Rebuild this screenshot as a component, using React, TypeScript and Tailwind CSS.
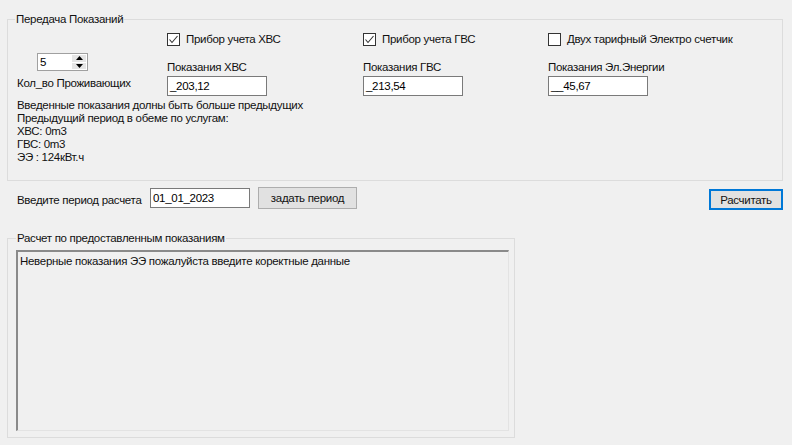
import React from "react";

function CheckBox({ checked, label }: { checked?: boolean; label: string }) {
  return (
    <div className="flex h-[13px] items-center">
      <span className="flex h-[13px] w-[13px] shrink-0 items-center justify-center border border-[#333333] bg-white">
        {checked && (
          <svg width="11" height="11" viewBox="0 0 11 11">
            <path d="M1.5 5.5 L4 8.5 L9.5 2" fill="none" stroke="#333333" strokeWidth="1.1" />
          </svg>
        )}
      </span>
      <span className="ml-[6px] whitespace-nowrap leading-[15px]">{label}</span>
    </div>
  );
}

function TextBox({ value }: { value: string }) {
  return (
    <div className="h-[20px] w-[100px] border border-[#7a7a7a] bg-white pl-[2px] leading-[18px] text-black">
      {value}
    </div>
  );
}

function MeterColumn({ check, checked, label, value, width }: { check: string; checked?: boolean; label: string; value: string; width: string }) {
  return (
    <div className={width}>
      <div className="mt-[6px]">
        <CheckBox checked={checked} label={check} />
      </div>
      <div className="mt-[14px] whitespace-nowrap leading-[15px]">{label}</div>
      <div className="mt-[1px]">
        <TextBox value={value} />
      </div>
    </div>
  );
}

function Spinner() {
  return (
    <div className="flex h-[18px] w-[51px] border border-[#a0a0a0] bg-white">
      <div className="flex-1 pl-[2px] leading-[16px] text-black">5</div>
      <div className="flex w-[15px] flex-col gap-[1px] bg-white py-[1px] pr-[1px]">
        <div className="flex flex-1 items-center justify-center bg-[#e5e5e5]">
          <svg width="7" height="4" viewBox="0 0 7 4">
            <path d="M0 4 L3.5 0 L7 4 Z" fill="#000" />
          </svg>
        </div>
        <div className="flex flex-1 items-center justify-center bg-[#e5e5e5]">
          <svg width="7" height="4" viewBox="0 0 7 4">
            <path d="M0 0 L7 0 L3.5 4 Z" fill="#000" />
          </svg>
        </div>
      </div>
    </div>
  );
}

export default function App() {
  return (
    <div className="flex h-[445px] w-[792px] flex-col overflow-hidden bg-[#f0f0f0] font-['Liberation_Sans',Arial,sans-serif] text-[11.5px] tracking-[-0.3px] text-[#111111]">
      <fieldset className="ml-[7px] mt-[12px] w-[776px] border border-[#dcdcdc] pb-[16px] pl-[9px]">
        <legend className="ml-[-2px] px-[1px] leading-[15px]">Передача Показаний</legend>
        <div className="flex">
          <div className="w-[150px]">
            <div className="ml-[20px] mt-[26px]">
              <Spinner />
            </div>
            <div className="mt-[5px] whitespace-nowrap leading-[15px]">Кол_во Проживающих</div>
          </div>
          <MeterColumn width="w-[196px]" checked check="Прибор учета ХВС" label="Показания ХВС" value="_203,12" />
          <MeterColumn width="w-[185px]" checked check="Прибор учета ГВС" label="Показания ГВС" value="_213,54" />
          <MeterColumn width="w-[200px]" check="Двух тарифный Электро счетчик" label="Показания Эл.Энергии" value="__45,67" />
        </div>
        <div className="mt-[3px] leading-[13px]">
          <div>Введенные показания долны быть больше предыдущих</div>
          <div>Предыдущий период в обеме по услугам:</div>
          <div>ХВС: 0m3</div>
          <div>ГВС: 0m3</div>
          <div>ЭЭ : 124кВт.ч</div>
        </div>
      </fieldset>

      <div className="flex items-start pl-[17px] pr-[9px]">
        <div className="mt-[12px] w-[133px] whitespace-nowrap leading-[15px]">Введите период расчета</div>
        <div className="mt-[7px]">
          <TextBox value="01_01_2023" />
        </div>
        <button className="ml-[8px] mt-[6px] h-[22px] w-[99px] border border-[#adadad] bg-[#e1e1e1] leading-[18px] text-[#111111]">
          задать период
        </button>
        <button className="ml-auto mt-[8px] h-[21px] w-[74px] border-2 border-[#0078d7] bg-[#e1e1e1] leading-[16px] text-[#111111]">
          Расчитать
        </button>
      </div>

      <fieldset className="ml-[7px] mt-[21px] h-[207px] w-[508px] border border-[#dcdcdc] pl-[8px] pt-[4px]">
        <legend className="ml-0 px-[1px] leading-[15px]">Расчет по предоставленным показаниям</legend>
        <div className="h-[181px] w-[493px] border-b border-l-2 border-r border-t-2 border-b-[#e3e3e3] border-l-[#8a8a8a] border-r-[#e3e3e3] border-t-[#8a8a8a] bg-[#f0f0f0] pl-[2px] pt-[2px] leading-[15px]">
          Неверные показания ЭЭ пожалуйста введите коректные данные
        </div>
      </fieldset>
    </div>
  );
}
